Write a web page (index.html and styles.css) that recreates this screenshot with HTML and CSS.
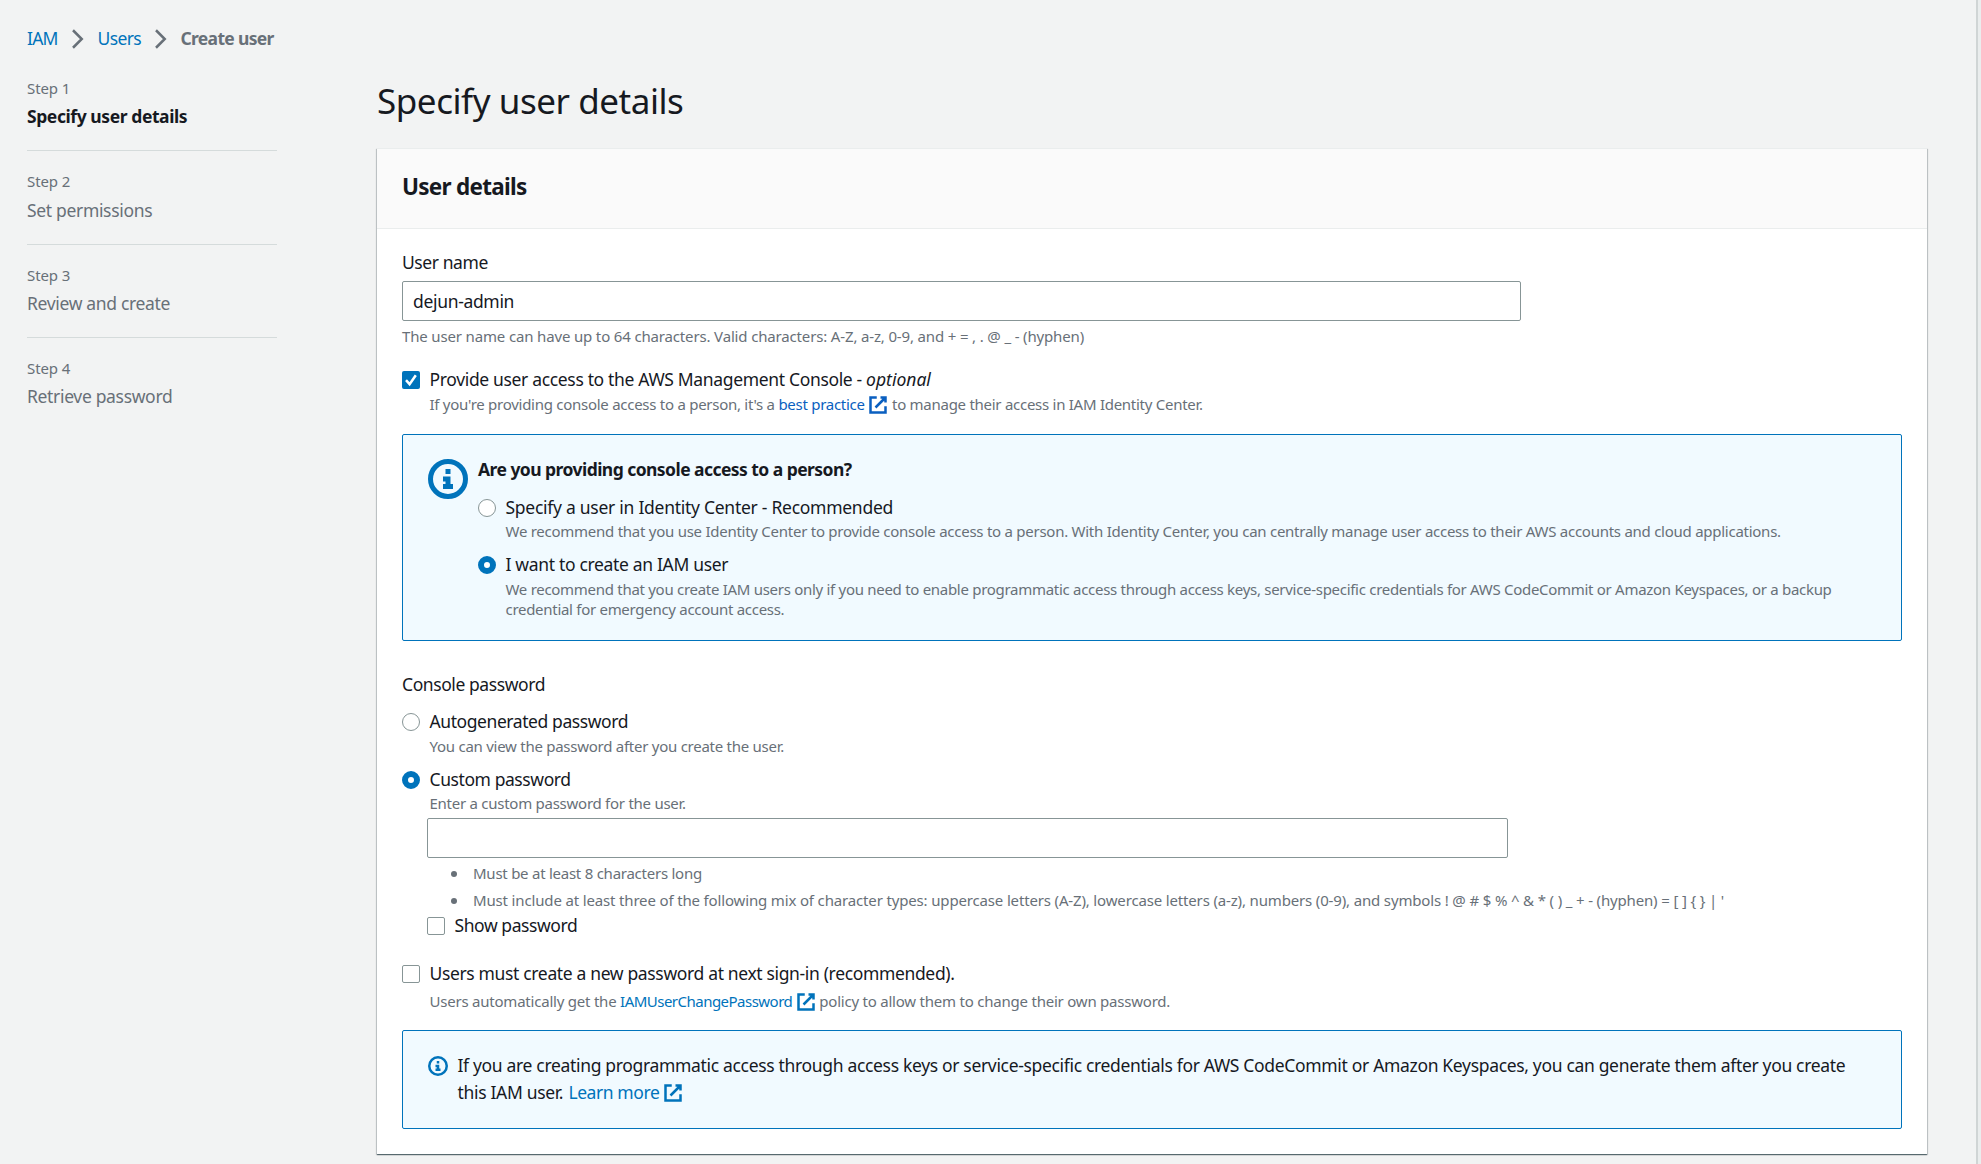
FILE: index.html
```html
<!DOCTYPE html>
<html lang="en">
<head>
<meta charset="utf-8">
<title>Create user | IAM</title>
<link rel="stylesheet" href="styles.css">
</head>
<body>
<svg class="defs" width="0" height="0">
  <symbol id="ext" viewBox="0 0 16 16"><path d="M10 2h4v4M6 10l8-8M14 9.05V14H2V2h5"/></symbol>
  <symbol id="info" viewBox="0 0 16 16"><circle cx="8" cy="8" r="7"/><path d="M8 11V8H6M10 11H6M8 6V4"/></symbol>
  <symbol id="chev" viewBox="0 0 16 16"><path d="M4 1l7 7-7 7"/></symbol>
  <symbol id="tick" viewBox="0 0 18 18"><path d="M4 9.2l3.6 4L13.8 4.2"/></symbol>
</svg>
<div class="page">
  <div class="view">
    <nav class="crumbs">
      <a class="iam">IAM</a><svg class="ic chev"><use href="#chev"/></svg>
      <a class="users">Users</a><svg class="ic chev"><use href="#chev"/></svg>
      <b>Create user</b>
    </nav>
    <div class="columns">
      <ol class="steps">
        <li><small>Step 1</small><strong>Specify user details</strong></li>
        <li><small>Step 2</small><span>Set permissions</span></li>
        <li><small>Step 3</small><span>Review and create</span></li>
        <li><small>Step 4</small><span>Retrieve password</span></li>
      </ol>
      <main>
        <h1>Specify user details</h1>
        <section class="card">
          <header><h2>User details</h2></header>
          <div class="body">
            <div class="label short">User name</div>
            <div class="input name">dejun-admin</div>
            <div class="hint loose">The user name can have up to 64 characters. Valid characters: A-Z, a-z, 0-9, and + = , . @ _ - (hyphen)</div>

            <div class="option access">
              <span class="box on"><svg><use href="#tick"/></svg></span>
              <div>
                <div class="label provide">Provide user access to the AWS Management Console - <i>optional</i></div>
                <div class="hint practice">If you're providing console access to a person, it's a <a class="deep">best practice <svg class="ic"><use href="#ext"/></svg></a> to manage their access in IAM Identity Center.</div>
              </div>
            </div>

            <div class="alert person">
              <svg class="ic big"><use href="#info"/></svg>
              <div class="choices">
                <h3>Are you providing console access to a person?</h3>
                <div class="option first">
                  <span class="radio"></span>
                  <div>
                    <div class="label semi">Specify a user in Identity Center - Recommended</div>
                    <div class="hint">We recommend that you use Identity Center to provide console access to a person. With Identity Center, you can centrally manage user access to their AWS accounts and cloud applications.</div>
                  </div>
                </div>
                <div class="option second">
                  <span class="radio on"></span>
                  <div>
                    <div class="label">I want to create an IAM user</div>
                    <div class="hint tight">We recommend that you create IAM users only if you need to enable programmatic access through access keys, service-specific credentials for AWS CodeCommit or Amazon Keyspaces, or a backup credential for emergency account access.</div>
                  </div>
                </div>
              </div>
            </div>

            <div class="label console short">Console password</div>
            <div class="option auto">
              <span class="radio"></span>
              <div>
                <div class="label short">Autogenerated password</div>
                <div class="hint">You can view the password after you create the user.</div>
              </div>
            </div>
            <div class="option custom">
              <span class="radio on"></span>
              <div>
                <div class="label short">Custom password</div>
                <div class="hint">Enter a custom password for the user.</div>
              </div>
            </div>
            <div class="nested">
              <div class="input"></div>
              <ul class="rules">
                <li>Must be at least 8 characters long</li>
                <li class="loose">Must include at least three of the following mix of character types: uppercase letters (A-Z), lowercase letters (a-z), numbers (0-9), and symbols ! @ # $ % ^ &amp; * ( ) _ + - (hyphen) = [ ] { } | '</li>
              </ul>
              <div class="option show">
                <span class="box"></span>
                <div class="label short">Show password</div>
              </div>
            </div>

            <div class="option change">
              <span class="box"></span>
              <div>
                <div class="label must">Users must create a new password at next sign-in (recommended).</div>
                <div class="hint auto-policy">Users automatically get the <a class="policy">IAMUserChangePassword <svg class="ic"><use href="#ext"/></svg></a> policy to allow them to change their own password.</div>
              </div>
            </div>

            <div class="alert keys">
              <svg class="ic"><use href="#info"/></svg>
              <p>If you are creating programmatic access through access keys or service-specific credentials for AWS CodeCommit or Amazon Keyspaces, you can generate them after you create this IAM user. <a class="more">Learn more <svg class="ic"><use href="#ext"/></svg></a></p>
            </div>
          </div>
        </section>
      </main>
    </div>
  </div>
  <div class="rail"></div>
</div>
</body>
</html>
```
FILE: styles.css
```css
* { box-sizing: border-box; }
body {
  margin: 0;
  background: #f2f3f3;
  color: #16191f;
  font: 17.5px/25px "Noto Sans", "Open Sans", sans-serif;
  letter-spacing: -0.33px;
}
h1, h2, h3, p, ul, ol { margin: 0; padding: 0; }
ol, ul { list-style: none; }
a { color: #0073bb; }
.defs { display: block; position: absolute; }
.page { display: flex; height: 1164px; overflow: hidden; }
.view { flex: 1; padding: 26px 49px 0 27px; }
.rail { width: 6px; background: #eaeded; border-left: 2px solid #d0d5d5; }

.ic {
  width: 20px;
  height: 20px;
  fill: none;
  stroke: currentColor;
  stroke-width: 2;
  vertical-align: -4px;
  flex: none;
}
.crumbs { display: flex; align-items: center; height: 25px; color: #687078; }
.crumbs b { letter-spacing: -0.68px; }
.crumbs .iam { letter-spacing: -0.8px; width: 31px; }
.crumbs .users { letter-spacing: -0.6px; width: 43.5px; }
.chev { margin: 0 10px 0 9.5px; }

.columns { display: grid; grid-template-columns: 250px 1550px; column-gap: 100px; }
.steps { padding-top: 27px; color: #687078; }
.steps li { border-bottom: 1px solid #d5dbdb; margin-bottom: 20px; height: 73.3px; }
.steps li:last-child { border: 0; }
.steps small, .steps strong, .steps span { display: block; }
.steps small { font-size: 15px; line-height: 20px; margin-bottom: 6.3px; letter-spacing: -0.1px; }
.steps strong { color: #16191f; letter-spacing: -0.42px; }

h1 { margin-top: 27.5px; font-size: 35px; line-height: 44px; font-weight: 400; letter-spacing: -0.45px; }
.card {
  margin-top: 25.5px;
  height: 1006px;
  background: #fff;
  border-top: 1px solid #eaeded;
  box-shadow: 0 1px 1px 0 rgba(0, 28, 36, 0.5), 1px 1px 1px 0 rgba(0, 28, 36, 0.15), -1px 1px 1px 0 rgba(0, 28, 36, 0.15);
}
.card header { height: 80px; padding: 23.5px 25px 0; background: #fafafa; border-bottom: 1px solid #eaeded; }
h2 { font-size: 22.5px; line-height: 28px; letter-spacing: -0.72px; }
.body { padding: 21.4px 25px 0; }

.input {
  height: 40px;
  border: 1px solid #879596;
  border-radius: 2px;
  background: #fff;
  padding: 7px 10px;
}
.name { width: 1119px; margin: 5.6px 0 5px; }
.hint { font-size: 15px; line-height: 20px; color: #687078; letter-spacing: -0.26px; }
.hint .ic { margin: -5px 0; vertical-align: 0; }
.hint.tight { letter-spacing: -0.29px; }
.hint.practice { letter-spacing: -0.27px; }
.hint.auto-policy { letter-spacing: -0.22px; }
.hint.loose, .rules .loose { letter-spacing: -0.155px; }
.label.short { letter-spacing: -0.42px; }
.label.provide { letter-spacing: -0.34px; }
.label.provide i { letter-spacing: 0; }
.label.semi { letter-spacing: -0.27px; }
.label.must { letter-spacing: -0.35px; }
.deep { color: #0a5fc0; }
.hint .policy { letter-spacing: -0.52px; }

.option { display: flex; gap: 9.5px; }
.access { margin-top: 21px; }
.access .hint { margin-top: 2px; }
.box, .radio {
  flex: none;
  width: 18px;
  height: 18px;
  margin-top: 4px;
  border: 1px solid #879596;
  border-radius: 2px;
  background: #fff;
}
.radio { border-radius: 50%; }
.radio.on { border: 6px solid #0073bb; }
.box.on { border: 0; background: #0073bb; }
.box svg { display: block; width: 18px; height: 18px; fill: none; stroke: #fff; stroke-width: 2.5; }

.alert { display: flex; border: 1px solid #0073bb; border-radius: 2px; background: #f1faff; }
.alert > .ic { color: #0073bb; }
.person { margin-top: 20px; height: 207px; padding: 22px 60px 0 25px; }
.big { width: 40px; height: 40px; margin-top: 2px; }
.choices { margin-left: 10px; }
h3 { font-size: 17.5px; line-height: 25px; letter-spacing: -0.55px; }
.first { margin-top: 12.6px; }
.first .hint { margin-top: 1px; }
.second { margin-top: 11.4px; }
.second .hint { margin-top: 2px; }

.console { margin-top: 31px; }
.auto { margin-top: 12px; }
.auto .hint { margin-top: 2px; }
.custom { margin-top: 11px; }
.custom .hint { margin-top: 1px; }
.nested { margin: 5px 0 0 25px; width: 1430px; }
.nested .input { width: 1081px; }
.rules { padding: 5px 0 0 46px; font-size: 15px; color: #687078; letter-spacing: -0.25px; }
.rules li { position: relative; line-height: 20px; margin-bottom: 7px; }
.rules li:last-child { margin-bottom: 3px; }
.rules li::before {
  content: "";
  position: absolute;
  left: -22px;
  top: 8px;
  width: 6px;
  height: 6px;
  border-radius: 50%;
  background: #687078;
}
.change { margin-top: 23px; }
.change .hint { margin-top: 5px; }
.keys { margin-top: 19px; height: 99px; padding: 21px 40px 0 25px; line-height: 27px; }
.keys > .ic { margin-top: 4px; }
.keys p { margin-left: 9.5px; }
.more { letter-spacing: -0.42px; margin-left: 1px; }
```
